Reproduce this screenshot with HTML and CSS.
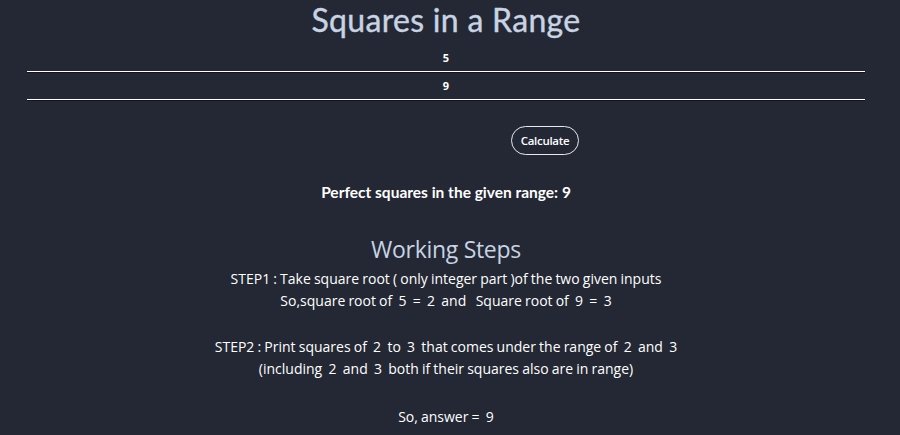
FILE: index.html
```html
<!DOCTYPE html>
<html>
<head>
<meta charset="utf-8">
<link rel="stylesheet" href="styles.css">
</head>
<body>
<div class="page">
  <h1 class="title">Squares in a Range</h1>
  <div class="inputs">
    <input class="field" type="text" value="5">
    <input class="field" type="text" value="9">
  </div>
  <div class="actions">
    <button class="btn">Calculate</button>
  </div>
  <p class="result">Perfect squares in the given range: 9</p>
  <h2 class="steps-title">Working Steps</h2>
  <div class="steps">
    <p class="line">STEP1 : Take square root ( only integer part )of the two given inputs</p>
    <p class="line">So,square root of &nbsp;5 &nbsp;= &nbsp;2 &nbsp;and &nbsp; Square root of &nbsp;9 &nbsp;= &nbsp;3</p>
    <p class="line gap">STEP2 : Print squares of &nbsp;2 &nbsp;to &nbsp;3 &nbsp;that comes under the range of &nbsp;2 &nbsp;and &nbsp;3</p>
    <p class="line">(including &nbsp;2 &nbsp;and &nbsp;3 &nbsp;both if their squares also are in range)</p>
    <p class="line gap answer">So, answer = &nbsp;9</p>
  </div>
</div>
</body>
</html>
```

FILE: styles.css
```css
html, body {
  margin: 0;
  padding: 0;
  background: #232834;
}
.page {
  display: flex;
  flex-direction: column;
  align-items: center;
  padding-right: 8px;
  font-family: "Open Sans", "Liberation Sans", sans-serif;
  color: #ffffff;
}
.title {
  margin: 0;
  height: 39px;
  line-height: 39px;
  font-family: "Lato", "Open Sans", sans-serif;
  font-weight: 400;
  font-size: 32px;
  color: #c8d3e3;
  letter-spacing: 0.3px;
  -webkit-text-stroke: 0.4px #c8d3e3;
}
.inputs {
  display: flex;
  flex-direction: column;
  align-self: stretch;
  padding: 5px 27px 0 27px;
}
.field {
  height: 28px;
  box-sizing: border-box;
  border: none;
  border-bottom: 1px solid #ffffff;
  box-shadow: 0 1px 0 #11141a;
  background: transparent;
  color: #ffffff;
  text-align: center;
  font-family: "Open Sans", sans-serif;
  font-weight: 700;
  font-size: 11px;
  padding: 0;
  outline: none;
}
.actions {
  display: flex;
  justify-content: center;
  padding: 26px 0 0 198px;
}
.btn {
  width: 68px;
  height: 29px;
  border: 1px solid #e6e9ee;
  border-radius: 15px;
  background: transparent;
  color: #ffffff;
  font-family: "Open Sans", sans-serif;
  font-size: 11.5px;
  font-weight: 600;
  padding: 0;
  letter-spacing: -0.3px;
}
.result {
  margin: 27px 0 0 0;
  font-family: "Lato", sans-serif;
  font-weight: 700;
  font-size: 15.5px;
  line-height: 20px;
}
.steps-title {
  margin: 33px 0 0 0;
  font-family: "Open Sans", sans-serif;
  font-weight: 400;
  font-size: 23px;
  line-height: 28px;
  letter-spacing: -0.3px;
  color: #c8d3e3;
}
.steps {
  display: flex;
  flex-direction: column;
  align-items: center;
  padding-top: 5px;
}
.line {
  margin: 0;
  font-family: "Open Sans", sans-serif;
  font-size: 14px;
  line-height: 21.5px;
  letter-spacing: 0;
  word-spacing: -0.5px;
}
.gap {
  margin-top: 25px;
}
.answer {
  margin-top: 27px;
}
```
